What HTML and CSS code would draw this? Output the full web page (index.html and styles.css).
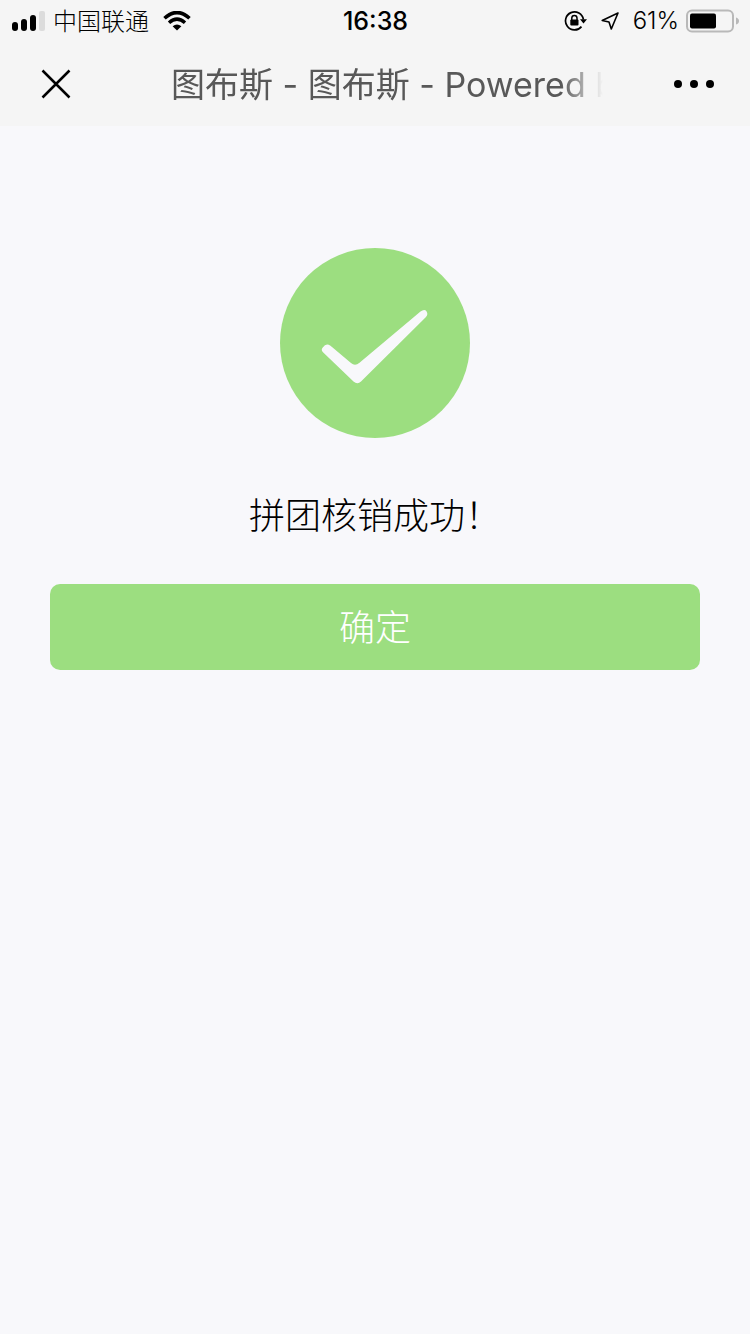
FILE: index.html
```html
<!DOCTYPE html>
<html lang="zh-CN">
<head>
<meta charset="utf-8">
<meta name="viewport" content="width=device-width, initial-scale=1">
<title>图布斯 - 图布斯 - Powered by</title>
<link rel="stylesheet" href="styles.css">
</head>
<body>
<header class="top">
  <div class="status">
    <div class="status-left">
      <svg class="signal" width="34" height="20" viewBox="0 0 34 20" aria-hidden="true">
        <rect x="0" y="11" width="6" height="9" rx="3"/>
        <rect x="9" y="8" width="6" height="12" rx="3"/>
        <rect x="18" y="4" width="6" height="16" rx="3"/>
        <rect x="27" y="0" width="6" height="20" rx="2" fill="#dcdcdc"/>
      </svg>
      <span class="carrier">中国联通</span>
      <svg class="wifi" width="28" height="20" viewBox="0 0 28 20" aria-hidden="true">
        <path d="M1.5 7.3Q14-4.2 26.5 7.3" fill="none" stroke="#000" stroke-width="3.6"/>
        <path d="M6 11.8Q14 4.5 22 11.8" fill="none" stroke="#000" stroke-width="3.4"/>
        <path d="M9.6 15.2Q14 11.6 18.4 15.2L14 19.6Z"/>
      </svg>
    </div>
    <time class="clock">16:38</time>
    <div class="status-right">
      <svg class="lock" width="24" height="22" viewBox="0 0 24 22" aria-hidden="true">
        <path d="M17.5 16.6A9 9 0 1 1 19.4 9.5" fill="none" stroke="#000" stroke-width="1.7"/>
        <path d="M16 9.3h7l-3.5 4.2z"/>
        <path d="M7.8 10V8.1a2.6 2.6 0 0 1 5.2 0V10" fill="none" stroke="#000" stroke-width="1.5"/>
        <rect x="6.3" y="9.5" width="8.2" height="6" rx="1"/>
      </svg>
      <svg class="arrow" width="20" height="20" viewBox="0 0 20 20" aria-hidden="true">
        <path d="M18 2L2.2 9.5L9 11L11.3 18Z" fill="none" stroke="#000" stroke-width="1.6" stroke-linejoin="round"/>
      </svg>
      <span class="percent">61%</span>
      <svg class="battery" width="53" height="24" viewBox="0 0 53 24" aria-hidden="true">
        <rect x="1" y="1.5" width="46" height="21" rx="5" fill="none" stroke="#b9b9b9" stroke-width="2"/>
        <rect x="4" y="4.5" width="26" height="15" rx="2"/>
        <path d="M50 8.5q3 1 3 3.5t-3 3.5z" fill="#b9b9b9"/>
      </svg>
    </div>
  </div>
  <nav class="nav">
    <button class="icon-button close" type="button" aria-label="关闭">
      <svg width="30" height="30" viewBox="0 0 30 30"><path d="M1.5 1.5L28.5 28.5M28.5 1.5L1.5 28.5" stroke="#000" stroke-width="2.5"/></svg>
    </button>
    <h1 class="title">图布斯 - 图布斯 - Powered by</h1>
    <button class="icon-button more" type="button" aria-label="更多">
      <svg width="42" height="10" viewBox="0 0 42 10"><circle cx="5" cy="5" r="4"/><circle cx="21" cy="5" r="4"/><circle cx="37" cy="5" r="4"/></svg>
    </button>
  </nav>
</header>
<main class="result">
  <svg class="badge" width="190" height="190" viewBox="0 0 190 190" aria-hidden="true">
    <circle cx="95" cy="95" r="95" fill="#9cde80"/>
    <path d="M43 99.2Q46 94.5 50.5 97.7L71 115Q75 118.5 79.5 114.8L140.5 63.5Q144.5 60.5 146.6 63.4Q148.5 66.3 145.5 69.5L81 133.5Q77.5 137 73.5 133.5L43 104.3Q40.5 101.5 43 99.2Z" fill="#f8f8fb"/>
  </svg>
  <p class="message">拼团核销成功！</p>
  <button class="confirm" type="button">确定</button>
</main>
</body>
</html>
```
FILE: styles.css
```css
* {
  box-sizing: border-box;
}

body {
  margin: 0;
  min-height: 100vh;
  background: #f8f8fb;
  color: #000;
  font-family: Inter, "Noto Sans CJK SC", sans-serif;
}

svg {
  display: block;
  flex: none;
}

.top {
  background: #f5f5f5;
}

.status {
  display: grid;
  grid-template-columns: 1fr auto 1fr;
  align-items: center;
  height: 41px;
  padding: 0 11px 0 12px;
  font-size: 24px;
  line-height: 32px;
}

.status-left,
.status-right {
  display: flex;
  align-items: center;
}

.status-right {
  justify-content: flex-end;
}

.carrier {
  margin: 0 14px 0 7px;
  padding-top: 3px;
  font-weight: 300;
}

.clock {
  font-size: 25px;
  font-weight: 500;
}

.arrow {
  margin: 0 13px 0 12px;
}

.percent {
  margin-right: 7px;
  font-weight: 300;
}

.nav {
  display: grid;
  grid-template-columns: 171px 1fr 145px;
  align-items: center;
  height: 85px;
}

.icon-button {
  padding: 8px;
  border: 0;
  background: none;
  cursor: pointer;
}

.close {
  justify-self: start;
  margin-left: 33px;
}

.more {
  justify-self: end;
  margin-right: 27px;
}

.title {
  margin: 0;
  padding-top: 2px;
  overflow: hidden;
  color: #585858;
  font-size: 34px;
  font-weight: 400;
  line-height: 48px;
  white-space: nowrap;
  -webkit-mask-image: linear-gradient(to left, transparent 2px, #000 44px);
  mask-image: linear-gradient(to left, transparent 2px, #000 44px);
}

.result {
  display: flex;
  flex-direction: column;
  align-items: center;
  padding: 122px 50px 0;
}

.message {
  margin: 52px 0 42px;
  font-size: 36px;
  font-weight: 300;
  line-height: 52px;
}

.confirm {
  width: 100%;
  padding: 18px 0 16px;
  border: 0;
  border-radius: 10px;
  background: #9cde80;
  color: #fff;
  font-family: inherit;
  font-size: 36px;
  font-weight: 300;
  line-height: 52px;
  cursor: pointer;
}
```
